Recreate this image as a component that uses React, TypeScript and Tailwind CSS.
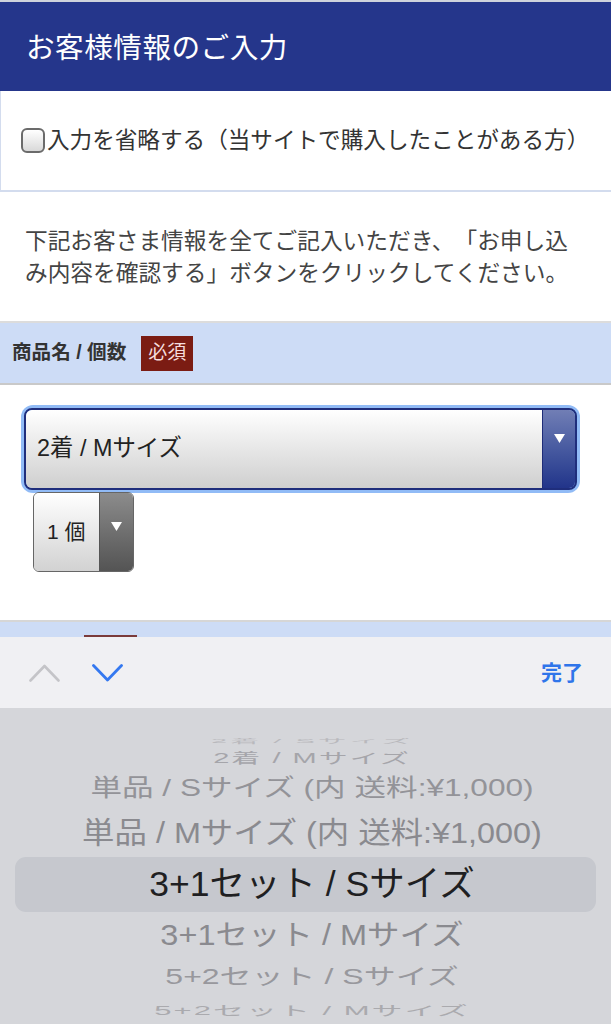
import type {ReactNode} from 'react';

const font = {fontFamily: '"Liberation Sans", "Noto Sans CJK JP", sans-serif'};

const Triangle = ({className}: {className?: string}) => (
  <svg width="11" height="9" viewBox="0 0 11 9" className={className}>
    <path d="M0 0 L11 0 L5.5 9 Z" fill="#ffffff" />
  </svg>
);

interface RowProps {
  h: string;
  size: string;
  tone: string;
  squash: string;
  children: ReactNode;
}

const WheelRow = (props: RowProps) => (
  <div className={`flex items-center justify-center overflow-hidden pl-[13px] ${props.h}`}>
    <span className={`whitespace-nowrap leading-none ${props.size} ${props.tone} ${props.squash}`}>
      {props.children}
    </span>
  </div>
);

export default function App() {
  return (
    <div className="w-[611px] h-[1024px] overflow-hidden bg-white [text-spacing-trim:space-all]" style={font}>
      <header className="h-[91px] border-t-2 border-[#cfd3dc] bg-[#25368b] flex items-center pl-[26px]">
        <h1 className="text-[28.6px] text-white tracking-[0.5px] pt-[3px]">お客様情報のご入力</h1>
      </header>

      <div className="h-[101px] border-l border-b-2 border-[#d3dcee] flex items-center pl-[20px]">
        <span className="w-[24px] h-[25px] rounded-[6px] border-2 border-[#6b6b6b] bg-gradient-to-b from-white to-[#d9d9d9] shrink-0" />
        <span className="text-[22.6px] text-[#333] ml-[2px] whitespace-nowrap">
          入力を省略する（当サイトで購入したことがある方）
        </span>
      </div>

      <p className="h-[129px] px-[25px] pt-[33px] text-[22.7px] leading-[32px] text-[#444]">
        下記お客さま情報を全てご記入いただき、「お申し込み内容を確認する」ボタンをクリックしてください。
      </p>

      <div className="h-[64px] border-y-2 border-t-[#dcdcdc] border-b-[#c9c9c9] bg-[#cddcf6] flex items-center pl-[12px] gap-[15px]">
        <span className="text-[19.6px] font-bold text-[#333]">商品名 / 個数</span>
        <span className="w-[52px] h-[35px] bg-[#7b1c13] text-[#f5dede] text-[19px] flex items-center justify-center">
          必須
        </span>
      </div>

      <div className="h-[235px] pt-[20px]">
        <div className="ml-[21px] w-[559px] p-[3px] rounded-[12px] bg-[#91bbf6]">
          <div className="h-[82px] border-2 border-[#1f2e7c] rounded-[8px] flex overflow-hidden">
            <div className="flex-1 bg-gradient-to-b from-white to-[#cfcfcf] flex items-center pl-[11px]">
              <span className="text-[23.4px] text-[#222]">2着 / Mサイズ</span>
            </div>
            <div className="w-[33px] border-l border-[#1e2c78] bg-gradient-to-b from-[#717eb5] to-[#22348a] flex justify-center pt-[24px]">
              <Triangle />
            </div>
          </div>
        </div>
        <div className="ml-[33px] -mt-[1px] w-[101px] h-[80px] border-[1.5px] border-[#666] rounded-[6px] flex overflow-hidden">
          <div className="flex-1 bg-gradient-to-b from-white to-[#d2d2d2] flex items-center pl-[13px]">
            <span className="text-[21px] text-[#222]">1 個</span>
          </div>
          <div className="w-[34px] border-l border-[#555] bg-gradient-to-b from-[#8c8c8c] to-[#545454] flex justify-center pt-[29px]">
            <Triangle />
          </div>
        </div>
      </div>

      <div className="h-[17px] border-t-2 border-[#d6d6d6] bg-[#cddcf6] flex items-end">
        <span className="ml-[84px] w-[53px] h-[2px] bg-[#7b3a3a]" />
      </div>

      <div className="h-[71px] bg-[#f0f0f3] flex items-center pl-[29px] pr-[28px]">
        <svg width="31" height="18" viewBox="0 0 31 18" fill="none">
          <path d="M1.5 16.5 L15.5 2 L29.5 16.5" stroke="#c4c4c8" strokeWidth="2.6" strokeLinecap="round" strokeLinejoin="round" />
        </svg>
        <svg width="31" height="18" viewBox="0 0 31 18" fill="none" className="ml-[32px]">
          <path d="M1.5 1.5 L15.5 16 L29.5 1.5" stroke="#3478f0" strokeWidth="2.8" strokeLinecap="round" strokeLinejoin="round" />
        </svg>
        <span className="ml-auto text-[21px] font-bold text-[#2f75ea]">完了</span>
      </div>

      <div className="h-[316px] bg-[#d5d6da] pt-[26px]">
        <WheelRow h="h-[14px]" size="text-[29px]" tone="text-[#b9b9bd]" squash="scale-y-[0.18] tracking-[3px]">
          2着 / Sサイズ
        </WheelRow>
        <WheelRow h="h-[20px]" size="text-[29px]" tone="text-[#a5a5aa]" squash="scale-y-[0.48] tracking-[2px]">
          2着 / Mサイズ
        </WheelRow>
        <WheelRow h="h-[42px]" size="text-[31.6px]" tone="text-[#939398]" squash="scale-y-[0.75]">
          単品 / Sサイズ (内 送料:¥1,000)
        </WheelRow>
        <WheelRow h="h-[47px]" size="text-[32.4px]" tone="text-[#8a8a8f]" squash="scale-y-[0.9]">
          単品 / Mサイズ (内 送料:¥1,000)
        </WheelRow>
        <div className="h-[55px] mx-[15px] rounded-[11px] bg-[#c6c8ce] flex items-center justify-center pl-[13px]">
          <span className="text-[35.5px] leading-none text-[#1f1f22] whitespace-nowrap">3+1セット / Sサイズ</span>
        </div>
        <WheelRow h="h-[46px]" size="text-[32.5px]" tone="text-[#8a8a8f]" squash="scale-y-[0.88]">
          3+1セット / Mサイズ
        </WheelRow>
        <WheelRow h="h-[38px]" size="text-[32px]" tone="text-[#98989d]" squash="scale-y-[0.68]">
          5+2セット / Sサイズ
        </WheelRow>
        <WheelRow h="h-[28px]" size="text-[31px]" tone="text-[#aaaaae]" squash="scale-y-[0.42] tracking-[2px]">
          5+2セット / Mサイズ
        </WheelRow>
      </div>
    </div>
  );
}
